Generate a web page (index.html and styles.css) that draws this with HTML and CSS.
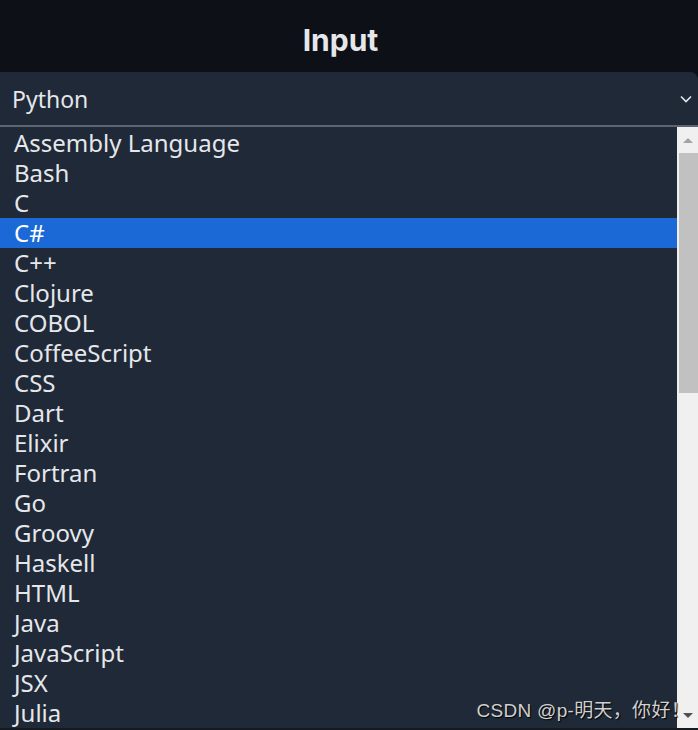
FILE: index.html
```html
<!DOCTYPE html>
<html lang="en">
<head>
<meta charset="utf-8">
<title>Input</title>
<link rel="stylesheet" href="styles.css">
</head>
<body>
<div class="page">
  <header class="header"><h1 class="title">Input</h1></header>
  <div class="select">
    <span class="select-value">Python</span>
    <svg class="chevron" width="14" height="10" viewBox="0 0 14 10"><path d="M2 2.5 L7 7.5 L12 2.5" fill="none" stroke="#e5e7eb" stroke-width="1.6"/></svg>
  </div>
  <div class="dropdown">
    <ul class="options">
      <li class="option">Assembly Language</li>
      <li class="option">Bash</li>
      <li class="option">C</li>
      <li class="option selected">C#</li>
      <li class="option">C++</li>
      <li class="option">Clojure</li>
      <li class="option">COBOL</li>
      <li class="option">CoffeeScript</li>
      <li class="option">CSS</li>
      <li class="option">Dart</li>
      <li class="option">Elixir</li>
      <li class="option">Fortran</li>
      <li class="option">Go</li>
      <li class="option">Groovy</li>
      <li class="option">Haskell</li>
      <li class="option">HTML</li>
      <li class="option">Java</li>
      <li class="option">JavaScript</li>
      <li class="option">JSX</li>
      <li class="option">Julia</li>
    </ul>
    <div class="scrollbar">
      <div class="arrow arrow-up"></div>
      <div class="track"><div class="thumb"></div></div>
      <div class="arrow arrow-down"></div>
    </div>
    <div class="watermark">CSDN @p-明天，你好！</div>
  </div>
</div>
</body>
</html>
```
FILE: styles.css
```css
html, body {
  margin: 0;
  padding: 0;
  background: #0d1117;
}
.page {
  width: 698px;
  height: 730px;
  display: flex;
  flex-direction: column;
  overflow: hidden;
}
.header {
  height: 72px;
  display: flex;
  align-items: center;
  justify-content: center;
  padding-right: 17px;
}
.title {
  margin: 8px 0 0 0;
  font-family: Inter, "Noto Sans", sans-serif;
  font-weight: 700;
  font-size: 30px;
  color: #e5e7eb;
}
.select {
  height: 53px;
  background: #1f2937;
  border-top-right-radius: 8px;
  display: flex;
  align-items: center;
  justify-content: space-between;
  padding: 0 5px 0 12px;
  font-family: "Noto Sans", sans-serif;
  font-size: 23px;
  color: #e5e7eb;
}
.dropdown {
  position: relative;
  flex: 1;
  display: flex;
  border-top: 2px solid #5f6570;
  border-bottom: 2px solid #151920;
  background: #1f2937;
  overflow: hidden;
}
.options {
  flex: 1;
  list-style: none;
  margin: 0;
  padding: 1px 0 0 0;
  font-family: "Noto Sans", sans-serif;
  font-size: 24px;
  color: #e5e7eb;
}
.option {
  height: 30px;
  line-height: 30px;
  padding-left: 14px;
  white-space: nowrap;
}
.option.selected {
  background: #1a69d6;
  color: #ffffff;
}
.scrollbar {
  width: 21px;
  background: #f0f0f0;
  display: flex;
  flex-direction: column;
}
.arrow {
  height: 26px;
  display: flex;
  align-items: center;
  justify-content: center;
}
.arrow-up::before {
  content: "";
  border-left: 5px solid transparent;
  border-right: 5px solid transparent;
  border-bottom: 5px solid #a3a3a3;
}
.arrow-down::before {
  content: "";
  border-left: 5px solid transparent;
  border-right: 5px solid transparent;
  border-top: 5px solid #505050;
}
.track {
  flex: 1;
}
.thumb {
  height: 240px;
  margin-left: 2px;
  background: #c1c1c1;
}
.watermark {
  position: absolute;
  right: 8px;
  bottom: 6px;
  font-family: "Liberation Sans", "Noto Sans CJK SC", sans-serif;
  font-size: 19px;
  color: #d0d0d0;
  text-shadow: 1px 1px 1px #000;
  letter-spacing: 0.3px;
}
```
